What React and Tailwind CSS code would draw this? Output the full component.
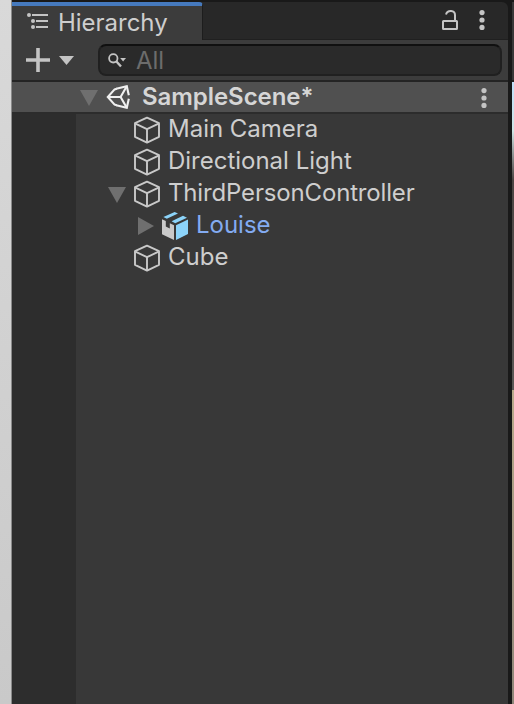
import React from "react";

function CubeIcon() {
  return (
    <svg className="block h-7 w-7 shrink-0" viewBox="0 0 28 28" fill="none" stroke="#c9c9c9" strokeWidth="1.9" strokeLinejoin="round">
      <path d="M14 1.6 26 7.2V20.8L14 26.6 2 20.8V7.2Z" />
      <path d="M2.4 7.6 14 13.2 25.6 7.6M14 13.2V26.2" />
    </svg>
  );
}

function PrefabIcon() {
  return (
    <svg className="block h-7 w-7 shrink-0" viewBox="0 0 28 28">
      <path d="M1 7.2 4.8 9V14.6L8.8 16.4V11.2L13 13.2V28L1 22.2Z" fill="#c9c9c9" />
      <path d="M15 13.2 27 7.5V22L15 28Z" fill="#8cd4fa" />
      <path d="M2.4 5 13.6 0 17 1.5 5.8 6.8Z" fill="#8cd4fa" />
      <path d="M10.6 9.2 22 3.8 26 5.7 14.2 11.2Z" fill="#8cd4fa" />
    </svg>
  );
}

function UnityIcon() {
  return (
    <svg className="block h-6 w-6 shrink-0" viewBox="0 0 24 24" fill="none" stroke="#f0f0f0" strokeWidth="2.1">
      <path d="M10.8 3.8 8.6 4.4 1.8 12 8.6 19.6 10.8 20.2" />
      <path d="M10.2 3.7 20.8 1.2 22.8 10.2M22.8 13.8 20.8 22.8 10.2 20.3" />
      <path d="M2 12H14.6L20.6 1.6M14.6 12 20.6 22.4" />
    </svg>
  );
}

function Kebab() {
  return (
    <svg className="block h-5 w-1.5 shrink-0" viewBox="0 0 6 20" fill="#c4c4c4">
      <circle cx="3" cy="2.6" r="2.6" />
      <circle cx="3" cy="10" r="2.6" />
      <circle cx="3" cy="17.4" r="2.6" />
    </svg>
  );
}

function Fold({ open }) {
  return (
    <svg className="block h-5 w-5 shrink-0" viewBox="0 0 20 20" fill="#6f6f6f">
      <path d={open ? "M1 3H19L10 19Z" : "M3 1 19 10 3 19Z"} />
    </svg>
  );
}

function Row({ name, open, tight }) {
  return (
    <div className="flex h-8 items-center pl-[31px]">
      <div className="flex w-[26px] items-center">{open && <Fold open />}</div>
      <CubeIcon />
      <span className={`ml-[7px] -translate-y-px whitespace-nowrap ${tight ? "tracking-[-0.16px]" : "tracking-[-0.01px]"}`}>{name}</span>
    </div>
  );
}

export default function App() {
  return (
    <div className="flex h-[704px] w-[514px] overflow-hidden bg-[#191919] text-2xl leading-8 text-[#cecece]" style={{ fontFamily: "Inter, sans-serif" }}>
      <div className="w-3 shrink-0 border-r border-[#8a8a8a] bg-linear-to-b from-[#d9d9d9] to-[#c9c9c9]" />
      <div className="flex w-[496px] shrink-0 flex-col bg-[#383838]">
        <div className="flex h-10 shrink-0 bg-[#191919] pt-0.5">
          <div className="flex w-full rounded-tr-md border-b border-[#202020] bg-[#282828]">
            <div className="-mb-px flex w-[191px] shrink-0 items-center rounded-tr-[4px] border-t-4 border-r border-t-[#467abe] border-r-[#1d1d1d] bg-[#3c3c3c] pl-3.5">
              <svg className="mr-2.5 block h-5 w-[22px] shrink-0 -translate-y-0.5" viewBox="0 0 22 20" fill="#c4c4c4">
                <circle cx="3" cy="4" r="2" />
                <circle cx="7" cy="10" r="2" />
                <circle cx="7" cy="16" r="2" />
                <path d="M6 3H22V5H6ZM10 9H22V11H10ZM10 15H22V17H10Z" />
              </svg>
              <span className="tracking-[-0.02px]">Hierarchy</span>
            </div>
            <div className="flex flex-1 items-center justify-end pr-[23px]">
              <svg className="mr-5 block h-[22px] w-[18px] -translate-y-px" viewBox="0 0 18 22" fill="none" stroke="#c4c4c4" strokeWidth="2">
                <rect x="2" y="12" width="14" height="8" rx="0.5" />
                <path d="M5 5.5C6.5 0.6 14 1 14 6V12" />
              </svg>
              <div className="-translate-y-px"><Kebab /></div>
            </div>
          </div>
        </div>
        <div className="flex h-10 shrink-0 items-center bg-[#3c3c3c] pl-3.5 pr-1.5">
          <svg className="block h-6 w-6 shrink-0" viewBox="0 0 24 24" fill="#c4c4c4">
            <path d="M10.2 0H13.8V10.2H24V13.8H13.8V24H10.2V13.8H0V10.2H10.2Z" />
          </svg>
          <svg className="ml-[9px] block h-[9px] w-[15px] shrink-0" viewBox="0 0 15 9" fill="#c4c4c4">
            <path d="M0 0H15L7.5 9Z" />
          </svg>
          <div className="ml-6 flex h-8 flex-1 items-center rounded-lg border-2 border-[#202020] border-t-[#101010] bg-[#2a2a2a] pl-2">
            <svg className="block h-[15px] w-[18px] shrink-0" viewBox="0 0 18 15" fill="none" stroke="#c4c4c4" strokeWidth="1.8">
              <circle cx="5.3" cy="5.3" r="4.2" />
              <path d="M8.2 8.2 13 13.5" strokeWidth="2.4" />
              <path d="M12.2 5H18L15.1 8.6Z" fill="#c4c4c4" stroke="none" />
            </svg>
            <span className="ml-2.5 translate-y-px text-[#6c6c6c]">All</span>
          </div>
        </div>
        <div className="flex h-[34px] shrink-0 items-center border-y-2 border-t-[#242424] border-b-[#2c2c2c] bg-[#505050] pl-[67px] pr-[21px]">
          <Fold open />
          <div className="ml-[7px]"><UnityIcon /></div>
          <span className="ml-3 flex-1 font-semibold tracking-[-0.06px] text-[#d6d6d6]">SampleScene*</span>
          <div className="translate-y-px"><Kebab /></div>
        </div>
        <div className="flex flex-1">
          <div className="w-16 shrink-0 bg-[#2d2d2d]" />
          <div className="flex-1 bg-[#383838]">
            <Row name="Main Camera" />
            <Row name="Directional Light" />
            <Row name="ThirdPersonController" open tight />
            <div className="flex h-8 items-center pl-[59px]">
              <Fold />
              <div className="ml-1.5"><PrefabIcon /></div>
              <span className="ml-[7px] -translate-y-px tracking-[-0.02px] text-[#83abf1]">Louise</span>
            </div>
            <Row name="Cube" />
          </div>
        </div>
      </div>
      <div className="w-1 shrink-0 bg-[#191919]" />
      <div className="flex w-0.5 shrink-0 flex-col">
        <div className="h-0.5 bg-[#191919]" />
        <div className="h-[78px] bg-[#383838]" />
        <div className="h-0.5 bg-[#242424]" />
        <div className="h-[98px] bg-linear-to-b from-[#c0e0fa] via-[#d0e6e6] to-[#4b4543]" />
        <div className="h-[210px] bg-linear-to-b from-[#4b4543] to-[#5a5856]" />
        <div className="flex-1 bg-linear-to-b from-[#b8aa8b] to-[#8e8679]" />
      </div>
    </div>
  );
}
